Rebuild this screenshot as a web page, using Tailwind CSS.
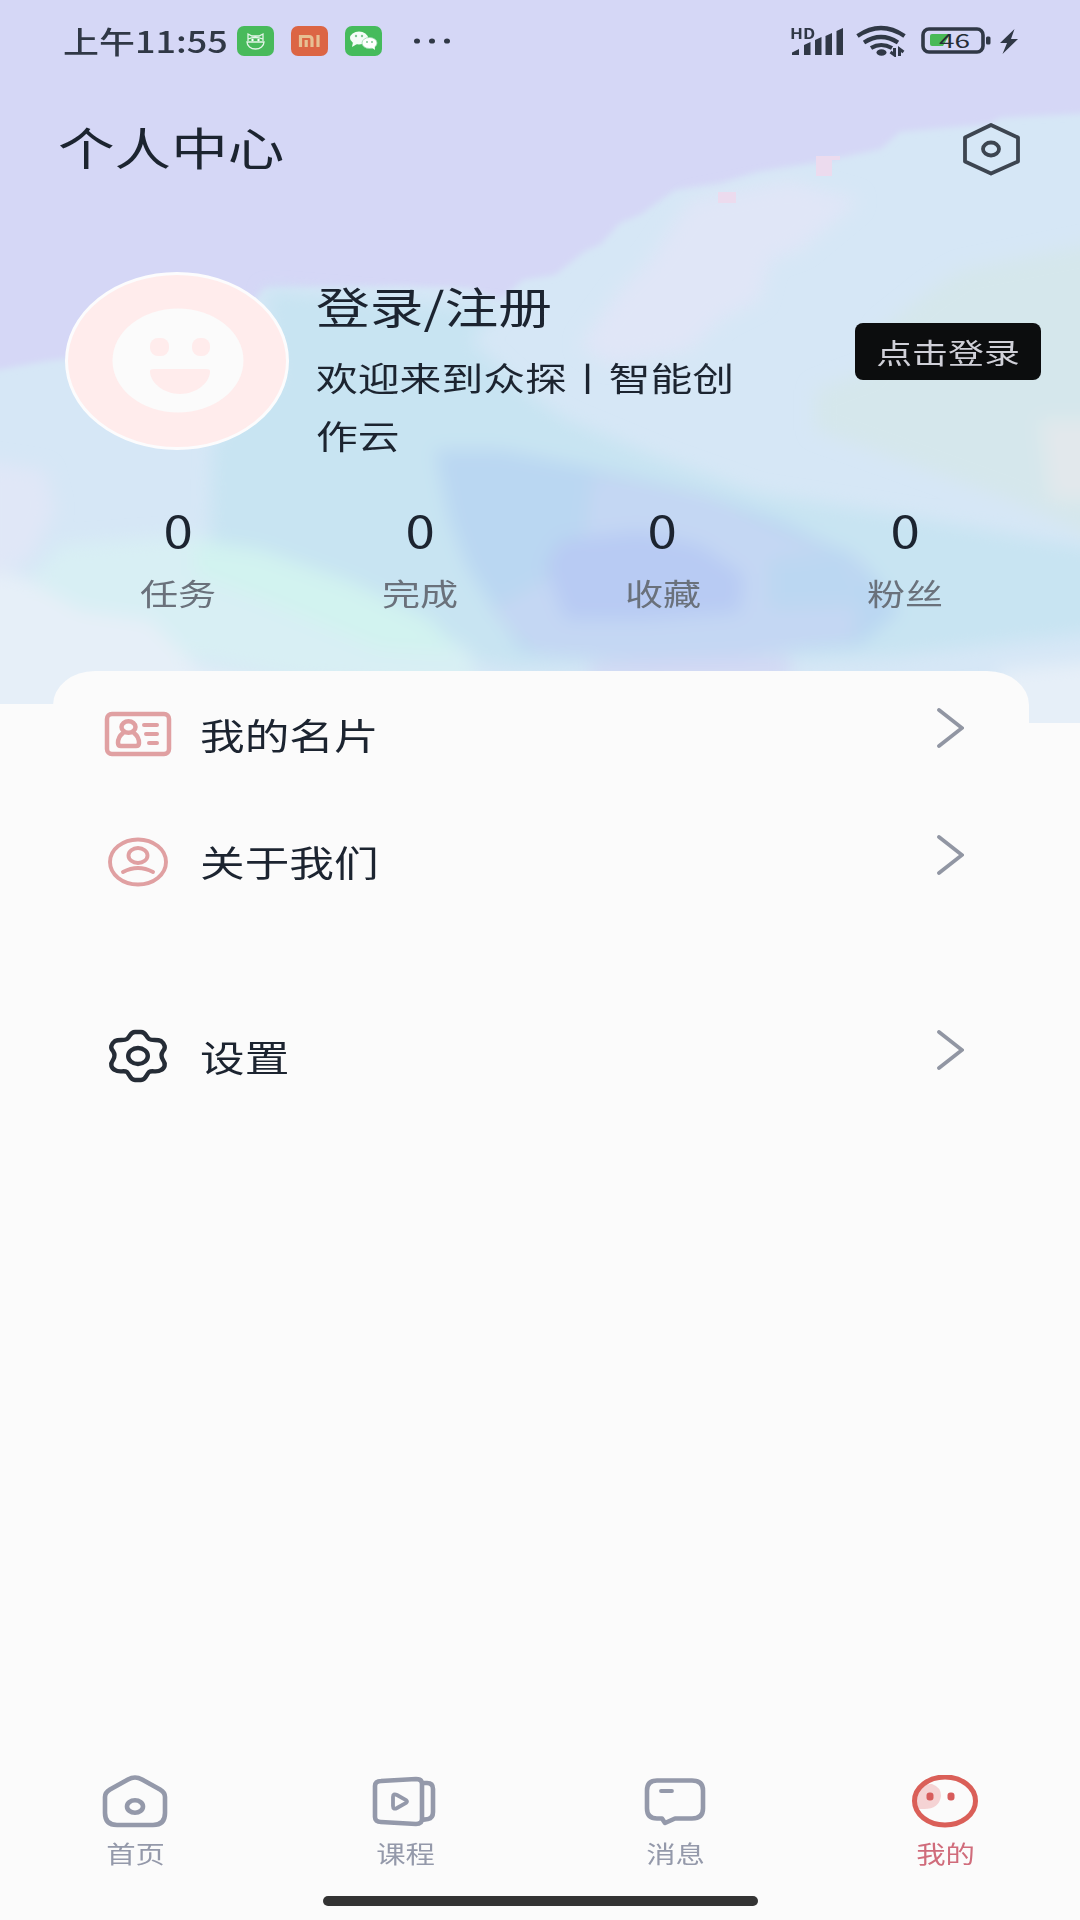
<!DOCTYPE html>
<html lang="zh-CN">
<head>
<meta charset="utf-8">
<title>个人中心</title>
<script src="https://cdn.jsdelivr.net/npm/@tailwindcss/browser@4"></script>
</head>
<body class="bg-[#fbfbfb]">
<div class="relative flex h-[1920px] w-[1080px] flex-col overflow-hidden bg-[#fbfbfb] font-['Noto_Sans_CJK_SC',sans-serif] text-[#1c2430]">

  <!-- pastel backdrop -->
  <svg class="absolute left-0 top-0" width="1080" height="724" viewBox="0 0 1080 724">
    <defs>
      <filter id="soft" x="-10%" y="-10%" width="120%" height="120%"><feGaussianBlur stdDeviation="9"/></filter>
      <filter id="faint" x="-10%" y="-10%" width="120%" height="120%"><feGaussianBlur stdDeviation="3"/></filter>
      <clipPath id="edge"><path d="M0 0H1080V723H700V704H0Z"/></clipPath>
    </defs>
    <g clip-path="url(#edge)">
      <rect width="1080" height="724" fill="#d6e7f6"/>
      <g filter="url(#faint)">
        <path d="M-30-30H1110V112L1000 118 990 124 900 132 881 149 820 162 757 172 720 184 675 190 640 215 620 223 600 245 585 251 555 275 523 280 500 300 470 288 400 286 265 288 230 330 130 350 41 362-30 375Z" fill="#d5d7f6"/>
      </g>
      <g filter="url(#soft)">
        <path d="M690 200L790 180 860 200 800 250 770 260 760 300 720 320 690 350 610 365 580 345 620 290 650 260Z" fill="#e0e6f7"/>
        <path d="M960 270L1110 240V545L1010 500 900 460 815 430 815 390 870 370 880 330 930 290Z" fill="#d5e7ec"/>
        <path d="M1040 420H1110V500H1050Z" fill="#e2e8ec"/>
        <path d="M265 290L500 310 470 340 530 395 565 419 654 456 757 493 900 515 1110 552V630L895 656 516 668 340 640 210 560 213 442 280 380Z" fill="#c8e4f2"/>
        <path d="M60 545L193 535 262 559 386 600 470 652 480 690 300 680 100 640 30 580Z" fill="#d8eff4"/>
        <path d="M195 540L260 550 350 582 430 620 460 655 380 650 260 600 195 575Z" fill="#d2f3f0"/>
        <path d="M-20 570L20 575 80 610 150 620 200 670 300 690V730H-20Z" fill="#e6eff8"/>
        <path d="M-20 460L45 470 55 510 30 560-20 580Z" fill="#e0e7f7"/>
        <path d="M435 450L500 450 592 468 702 493 780 520 861 560 900 610 860 645 689 658 523 652 468 568 450 520Z" fill="#bad7f2"/>
        <path d="M592 475L702 493 800 540 861 560 855 640 689 665 540 655 490 610 580 560Z" fill="#c4d7f3"/>
        <path d="M545 565L560 540 640 531 700 545 744 575 740 612 640 620 565 619Z" fill="#b8cbf3"/>
        <path d="M770 560L850 550 862 605 770 608Z" fill="#bbd7f2"/>
        <path d="M590 664L790 656V680H590Z" fill="#d3d8f4"/>
        <path d="M1000 670L1110 660V740H1000Z" fill="#e6eff8"/>
      </g>
      <g fill="#ecdbee"><path d="M816 156h24v4h-8v16h-16zM718 192h18v11h-18z"/></g>
    </g>
  </svg>

  <!-- status bar -->
  <header class="relative flex h-[82px] shrink-0 items-center pl-[63px] pr-[61px]">
    <div class="w-[174px] text-[29.5px] leading-none font-medium text-[#303846]"><span class="inline-block origin-left scale-x-[1.22] whitespace-nowrap">上午11:55</span></div>
    <div class="flex items-center gap-[17px]">
      <svg width="37" height="30" viewBox="0 0 37 30"><rect width="37" height="30" rx="7" fill="#48ba5b"/><g fill="none" stroke="#e4f5e8" stroke-width="1.3"><path d="M10 16h17a8.5 7 0 0 1-17 0Z"/><path d="M11 15V8l4 2h7l4-2v7M11 13q7-3 15 0"/></g><circle cx="15.500" cy="14" r="1.200" fill="#fff"/><circle cx="21.500" cy="14" r="1.200" fill="#fff"/></svg>
      <svg width="37" height="30" viewBox="0 0 37 30"><rect width="37" height="30" rx="7" fill="#dc6544"/><path d="M9.500 21V10.500H18q3 0 3 3V21M15.200 14v7M27 9v12" fill="none" stroke="#e7c093" stroke-width="3.200"/></svg>
      <svg width="37" height="30" viewBox="0 0 37 30"><rect width="37" height="30" rx="7" fill="#45bb5c"/><ellipse cx="14" cy="12" rx="9" ry="6.500" fill="#f4fcf8"/><path d="M8 16l-1 5 5-3z" fill="#f4fcf8"/><ellipse cx="24.500" cy="17" rx="7.500" ry="5.500" fill="#fff" stroke="#9bd9ae" stroke-width=".8"/><path d="M26 21l4 3-.5-5z" fill="#fff"/><g fill="#7cc792"><circle cx="11" cy="10" r="1.200"/><circle cx="17" cy="10" r="1.200"/><circle cx="22" cy="16" r="1"/><circle cx="27" cy="16" r="1"/></g></svg>
    </div>
    <svg class="ml-8" width="38" height="8" viewBox="0 0 38 8" fill="#303846"><ellipse cx="3" cy="4" rx="3" ry="2.600"/><ellipse cx="18" cy="4" rx="3" ry="2.600"/><ellipse cx="33" cy="4" rx="3" ry="2.600"/></svg>
    <div class="ml-auto flex items-center">
      <div class="relative">
        <svg width="56" height="32" viewBox="0 0 56 32" fill="#303846"><path d="M4 30v-2.500l7-3.500v6zM16 30V20l6.500-3v13zM27 30V15l6.500-3v18zM37.500 30V11l6.500-3v22zM48.500 30V6l6.500-3v27z"/></svg>
        <span class="absolute -top-px left-0.5 inline-block origin-left scale-x-[1.22] text-[14px] leading-[18px] font-bold text-[#303846]">HD</span>
      </div>
      <svg class="ml-[12px]" width="50" height="32" viewBox="0 0 50 32"><g fill="none" stroke="#303846" stroke-width="4.200"><path d="M1.500 11q23.500-16 47 0M8 17.500q17-11 34 0M15 23q10-6 21 0"/></g><ellipse cx="25.500" cy="27.500" rx="5" ry="3.300" fill="#303846"/><path d="M38.500 23v7l-4-3M43.500 31v-7l4 3" fill="none" stroke="#303846" stroke-width="3"/></svg>
      <svg class="ml-[15px]" width="72" height="28" viewBox="0 0 72 28"><rect x="2" y="2" width="60" height="23" rx="6" fill="none" stroke="#303846" stroke-width="3.600"/><path d="M9 9q0-2 2-2h18l-7 12H11q-2 0-2-2z" fill="#48b957"/><rect x="65" y="9.500" width="4.500" height="8" rx="1.500" fill="#303846"/><text x="18" y="20.500" font-family="Noto Sans CJK SC" font-size="19" textLength="31" lengthAdjust="spacingAndGlyphs" fill="#252d35">46</text></svg>
      <svg class="ml-1.5" width="20" height="26" viewBox="0 0 20 26" fill="#303846"><path d="M15.500 1L1 15h7L3.500 26 19 11h-7z"/></svg>
    </div>
  </header>

  <!-- title -->
  <div class="relative flex h-[132px] shrink-0 items-center justify-between pl-[58px] pr-[60px]">
    <h1 class="-mt-1 text-[45px] leading-none"><span class="inline-block origin-left scale-x-[1.257] whitespace-nowrap">个人中心</span></h1>
    <svg class="mt-0.5" width="58" height="54" viewBox="0 0 58 54" fill="none" stroke="#3d4550" stroke-width="3.800"><path d="M29 3L56 15.500V39.500L29 51.500 3 39.500V15.500Z" stroke-linejoin="round"/><ellipse cx="29" cy="27" rx="8" ry="6.500"/></svg>
  </div>

  <!-- profile -->
  <section class="relative flex h-[284px] shrink-0 pl-[65px] pt-[58px]">
    <svg width="225" height="180" viewBox="0 0 225 180"><ellipse cx="112" cy="89" rx="110.500" ry="87.500" fill="#ffecec" stroke="#fcfcfd" stroke-width="3"/><ellipse cx="113" cy="88.500" rx="65.500" ry="52" fill="#fbfbfb"/><g fill="#ffecec"><rect x="85" y="66" width="19" height="18" rx="8"/><rect x="127" y="66" width="18" height="18" rx="8"/><path d="M85 99q0-2 4-2h52q4 0 4 2c0 12-14 23-30 23S85 111 85 99Z"/></g></svg>
    <div class="ml-[26px] w-[440px] pt-[10px]">
      <h2 class="text-[43.500px] leading-[48px]"><span class="inline-block origin-left scale-x-[1.235] whitespace-nowrap">登录/注册</span></h2>
      <p class="mt-[18px] text-[33px] leading-[58px]"><span class="inline-block origin-left scale-x-[1.267] whitespace-nowrap">欢迎来到众探丨智能创<br>作云</span></p>
    </div>
    <button class="ml-[99px] mt-[51px] flex h-[57px] w-[186px] items-center justify-center rounded-lg bg-[#0c0d0e] pt-0.5 text-[28.5px] leading-none text-[#d0d0d8]"><span class="inline-block scale-x-[1.26] whitespace-nowrap">点击登录</span></button>
  </section>

  <!-- counters -->
  <section class="relative grid h-[173px] shrink-0 grid-cols-4 pl-[57px] pr-[54px] text-center">
    <div><div class="mt-[7px] text-[44px] leading-[48px]"><span class="inline-block scale-x-[1.2]">0</span></div><div class="mt-[21px] text-[30px] leading-[36px] text-[#6a717b]"><span class="inline-block scale-x-[1.27]">任务</span></div></div>
    <div><div class="mt-[7px] text-[44px] leading-[48px]"><span class="inline-block scale-x-[1.2]">0</span></div><div class="mt-[21px] text-[30px] leading-[36px] text-[#6a717b]"><span class="inline-block scale-x-[1.27]">完成</span></div></div>
    <div><div class="mt-[7px] text-[44px] leading-[48px]"><span class="inline-block scale-x-[1.2]">0</span></div><div class="mt-[21px] text-[30px] leading-[36px] text-[#6a717b]"><span class="inline-block scale-x-[1.27]">收藏</span></div></div>
    <div><div class="mt-[7px] text-[44px] leading-[48px]"><span class="inline-block scale-x-[1.2]">0</span></div><div class="mt-[21px] text-[30px] leading-[36px] text-[#6a717b]"><span class="inline-block scale-x-[1.27]">粉丝</span></div></div>
  </section>

  <!-- menu -->
  <main class="relative mr-[51px] ml-[53px] flex grow flex-col rounded-t-[42px_34px] bg-[#fbfbfb] pt-[13px] text-[36px] leading-none">
    <div class="flex h-[100px] items-center pl-[51px] pr-[65px]">
      <svg width="68" height="46" viewBox="0 0 68 46" fill="none" stroke="#e0a0a2" stroke-width="4.500" stroke-linecap="round"><rect x="3" y="3" width="62" height="40" rx="5"/><ellipse cx="24.500" cy="16" rx="7" ry="5.800"/><path d="M19 22c-4 3-5 6-5 10q0 3 3 3h15q3 0 3-3c0-4-1-7-5-10"/><path d="M40 14h13M42 23h11M45 32h8" stroke-width="4"/></svg>
      <span class="ml-[28px] inline-block origin-left scale-x-[1.24] whitespace-nowrap">我的名片</span>
      <svg class="-mt-3 ml-auto" width="28" height="40" viewBox="0 0 28 40" fill="none" stroke="#9196a3" stroke-width="3.800" stroke-linecap="round"><path d="M3 2L26 20 3 38"/></svg>
    </div>
    <div class="mt-[27px] flex h-[100px] items-center pl-[51px] pr-[65px]">
      <svg class="mt-0.5" width="68" height="50" viewBox="0 0 68 50" fill="none" stroke="#e0a0a2" stroke-width="3.900" stroke-linecap="round"><ellipse cx="34" cy="25" rx="28" ry="22.500"/><ellipse cx="34" cy="18.500" rx="9.500" ry="7.500"/><path d="M19 35q15-8 30 0"/></svg>
      <span class="ml-[28px] inline-block origin-left scale-x-[1.24] whitespace-nowrap">关于我们</span>
      <svg class="-mt-3 ml-auto" width="28" height="40" viewBox="0 0 28 40" fill="none" stroke="#9196a3" stroke-width="3.800" stroke-linecap="round"><path d="M3 2L26 20 3 38"/></svg>
    </div>
    <div class="mt-[95px] flex h-[100px] items-center pl-[51px] pr-[65px]">
      <svg width="68" height="54" viewBox="0 0 68 54" fill="none" stroke="#252c36" stroke-width="4.400" stroke-linejoin="round"><path d="M31 3H37C42 3 42 8 45 10C48 12 53 10 57 12C61 15 62 19 59 22C57 25 57 28 59 31C62 35 61 39 57 41C53 44 48 41 45 43C42 46 42 51 37 51H31C26 51 26 46 23 43C20 41 15 44 11 41C7 39 6 35 9 31C11 28 11 25 9 22C6 19 7 15 11 12C15 10 20 12 23 10C26 8 26 3 31 3Z"/><ellipse cx="34" cy="27" rx="9.800" ry="8"/></svg>
      <span class="ml-[28px] inline-block origin-left scale-x-[1.24] whitespace-nowrap">设置</span>
      <svg class="-mt-3 ml-auto" width="28" height="40" viewBox="0 0 28 40" fill="none" stroke="#9196a3" stroke-width="3.800" stroke-linecap="round"><path d="M3 2L26 20 3 38"/></svg>
    </div>
  </main>

  <!-- tab bar -->
  <nav class="relative grid h-[124px] shrink-0 grid-cols-4 text-[23.5px] leading-[28px] text-[#9499aa]">
    <div class="flex flex-col items-center">
      <svg class="mt-[-21px]" width="70" height="56" viewBox="0 0 70 56" fill="none" stroke="#9499aa" stroke-width="4.600"><path d="M28 4.500Q35 .5 42 4.500L60 14.500Q65 17.500 65 22V38Q65 50 53 50H17Q5 50 5 38V22Q5 17.500 10 14.500Z"/><ellipse cx="35" cy="31.500" rx="8" ry="6.200"/></svg>
      <span class="mt-[8px] inline-block scale-x-[1.25]">首页</span>
    </div>
    <div class="flex flex-col items-center">
      <svg class="mt-[-21px]" width="70" height="56" viewBox="0 0 70 56" fill="none" stroke="#9499aa" stroke-width="4.600"><path d="M11 6L46 4Q52 4 52 9V44Q52 49 46 49L11 47Q5 47 5 42V11Q5 6 11 6ZM53 8H57Q63 8 63 14V37Q63 43 58 44L52 45"/><path d="M23 22q0-4 4-2l9 5q2 1.500 0 3l-9 5q-4 2-4-2z" stroke-width="3.800"/></svg>
      <span class="mt-[8px] inline-block scale-x-[1.25]">课程</span>
    </div>
    <div class="flex flex-col items-center">
      <svg class="mt-[-21px]" width="70" height="56" viewBox="0 0 70 56" fill="none" stroke="#9499aa" stroke-width="4.600" stroke-linejoin="round"><path d="M17 5.500H52Q63 5.500 63 15.500V33.500Q63 43.500 52 43.500H35L25 48 22 43.500H17Q7 43.500 7 33.500V15.500Q7 5.500 17 5.500Z"/><path d="M21 16H32" stroke-linecap="round" stroke-width="3.800"/></svg>
      <span class="mt-[8px] inline-block scale-x-[1.25]">消息</span>
    </div>
    <div class="flex flex-col items-center text-[#d06c7b]">
      <svg class="mt-[-21px]" width="70" height="56" viewBox="0 0 70 56"><path d="M6 34C2 19 12 9 22 9Q31 12 31 21 29 35 12 34Z" fill="#f5d3d4"/><ellipse cx="35" cy="26" rx="30.500" ry="24" fill="none" stroke="#da5f58" stroke-width="5"/><rect x="16.500" y="17.500" width="7" height="8" rx="3" fill="#d75c5c"/><rect x="37.500" y="17.500" width="7" height="8" rx="3" fill="#d75c5c"/></svg>
      <span class="mt-[8px] inline-block scale-x-[1.25]">我的</span>
    </div>
    <div class="absolute bottom-[14px] left-[323px] h-[10px] w-[435px] rounded-full bg-[#333]"></div>
  </nav>
</div>
</body>
</html>
